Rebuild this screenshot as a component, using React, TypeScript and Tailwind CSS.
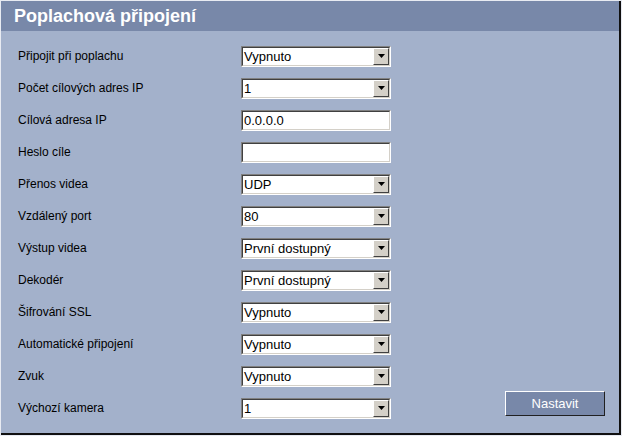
import React from 'react';

type Field = { label: string; kind: 'select' | 'text'; value: string };

const fields: Field[] = [
  { label: 'Připojit při poplachu', kind: 'select', value: 'Vypnuto' },
  { label: 'Počet cílových adres IP', kind: 'select', value: '1' },
  { label: 'Cílová adresa IP', kind: 'text', value: '0.0.0.0' },
  { label: 'Heslo cíle', kind: 'text', value: '' },
  { label: 'Přenos videa', kind: 'select', value: 'UDP' },
  { label: 'Vzdálený port', kind: 'select', value: '80' },
  { label: 'Výstup videa', kind: 'select', value: 'První dostupný' },
  { label: 'Dekodér', kind: 'select', value: 'První dostupný' },
  { label: 'Šifrování SSL', kind: 'select', value: 'Vypnuto' },
  { label: 'Automatické připojení', kind: 'select', value: 'Vypnuto' },
  { label: 'Zvuk', kind: 'select', value: 'Vypnuto' },
  { label: 'Výchozí kamera', kind: 'select', value: '1' },
];

const Box: React.FC<{ field: Field }> = ({ field }) => (
  <div className="w-[150px] h-[21px] border border-t-[#808080] border-l-[#808080] border-r-white border-b-white">
    <div className="h-full flex items-stretch bg-white border border-t-[#404040] border-l-[#404040] border-r-[#d4d0c8] border-b-[#d4d0c8]">
      <span className="flex-1 pl-[1px] text-[13px] leading-[17px] text-black">{field.value}</span>
      {field.kind === 'select' && (
        <span className="w-[16px] flex items-center justify-center bg-[#d4d0c8] border border-t-white border-l-white border-r-[#404040] border-b-[#404040]">
          <svg width="7" height="4" viewBox="0 0 7 4">
            <path d="M0 0h7L3.5 4z" fill="#000" />
          </svg>
        </span>
      )}
    </div>
  </div>
);

export default function App() {
  return (
    <div
      className="w-[622px] h-[436px] bg-[#d8dde8] border border-[#e8ebf2]"
      style={{ fontFamily: '"Liberation Sans", Arial, sans-serif' }}
    >
      <div className="h-full flex flex-col border-r-2 border-b-2 border-r-[#101010] border-b-[#101010] bg-[#a3b1cb]">
        <div className="h-[30px] shrink-0 bg-[#7888a9] flex items-center pl-[13px]">
          <h1 className="text-[18px] font-bold text-white leading-none">Poplachová připojení</h1>
        </div>
        <div className="pt-[9px] pl-[17px] pr-[14px] flex flex-col">
          {fields.map((f, i) => (
            <div key={f.label} className="h-[32px] flex items-center">
              <span className="w-[223px] text-[12px] text-black">{f.label}</span>
              <Box field={f} />
              {i === fields.length - 1 && (
                <button className="ml-auto self-start mt-[-1px] w-[100px] h-[25px] bg-[#7888a9] text-white text-[13px] border border-t-white border-l-white border-r-[#202020] border-b-[#202020]">
                  Nastavit
                </button>
              )}
            </div>
          ))}
        </div>
      </div>
    </div>
  );
}
